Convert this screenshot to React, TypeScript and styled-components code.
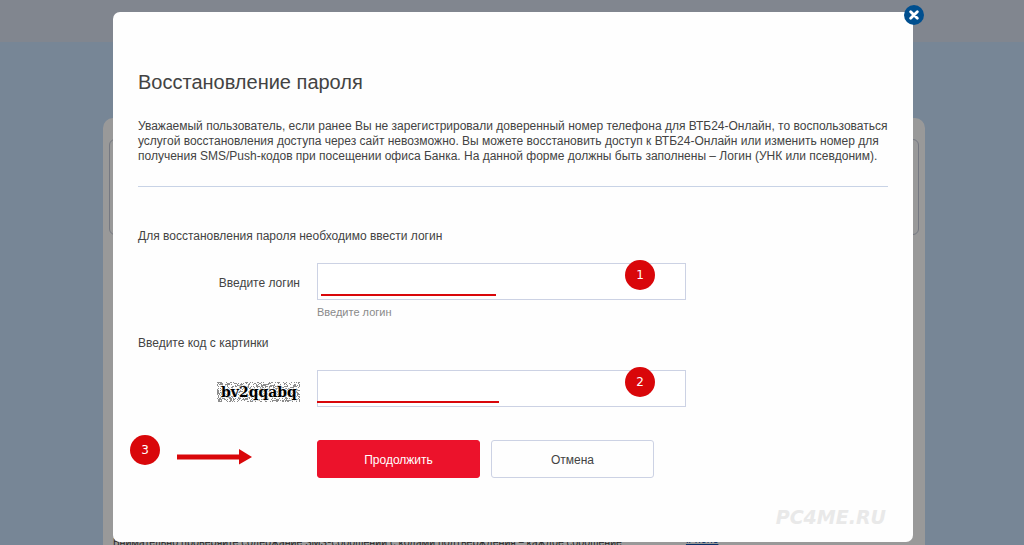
import React from "react";
import styled, { createGlobalStyle } from "styled-components";

const GlobalStyle = createGlobalStyle`
  * { box-sizing: border-box; }
  html, body, #root { height: 100%; margin: 0; }
  body {
    overflow: hidden;
    color: #434343;
    font-family: "Liberation Sans", Arial, sans-serif;
    font-size: 12px;
    line-height: 15px;
  }
  button, input { font: inherit; }
`;

const Page = styled.div`
  position: relative;
  min-height: 100vh;
  background: #c6dffa;
`;

const TopBar = styled.header`
  height: 42px;
  background: #d8dfee;
`;

const PageCard = styled.main`
  display: flex;
  flex-direction: column;
  gap: 297px;
  margin: 76px 99px 0 103px;
  padding: 21px 6px;
  border-radius: 10px;
  background: #ffffff;
`;

const OutlinePanel = styled.section`
  height: 96px;
  border: 1px solid #c3c9d8;
  border-radius: 6px;
`;

const PageNotes = styled.div`
  display: flex;
  padding-left: 4px;
  gap: 54px;
  font-family: Inter, sans-serif;
  font-size: 10px;
  white-space: nowrap;
`;

const NoteText = styled.p`
  margin: 0;
  padding-top: 3px;
`;

const StoreLink = styled.a`
  color: #0f4fa8;
  &::before {
    content: "»";
    display: inline-block;
    width: 10px;
    color: #e0703a;
  }
`;

const Overlay = styled.div`
  position: fixed;
  inset: 0;
  padding: 12px 111px 0 113px;
  background: rgba(0, 0, 0, 0.4);
`;

const Dialog = styled.section`
  position: relative;
  padding: 57px 25px 15px;
  border-radius: 7px;
  background: #fefefe;
`;

const CloseButton = styled.button`
  position: absolute;
  top: -7px;
  right: -11px;
  display: grid;
  width: 20px;
  height: 20px;
  padding: 0;
  place-items: center;
  border: 0;
  border-radius: 50%;
  background: #004f8f;
`;

const Title = styled.h1`
  margin: 0;
  font-size: 20px;
  line-height: 26px;
  font-weight: 400;
`;

const Intro = styled.p`
  margin: 24px -8px 0 0;
`;

const Divider = styled.hr`
  margin: 22px 0 0;
  border: 0;
  border-top: 1px solid #c8d3e6;
`;

const Prompt = styled.label<{ $space: number }>`
  display: block;
  margin: ${(p) => p.$space}px 0 0;
`;

const FormRow = styled.div<{ $space: number }>`
  display: grid;
  grid-template-columns: 162px 369px;
  column-gap: 17px;
  align-items: center;
  margin-top: ${(p) => p.$space}px;
`;

const Label = styled.label`
  justify-self: end;
  padding-top: 3px;
`;

const Field = styled.div`
  position: relative;
`;

const TextInput = styled.input`
  display: block;
  width: 100%;
  height: 37px;
  padding: 0 10px;
  border: 1px solid #ccd2e4;
  border-radius: 0;
  background: #ffffff;
`;

const Hint = styled.small`
  grid-column: 2;
  margin-top: 5px;
  color: #8a8a8a;
  font-size: 11px;
`;

const Marker = styled.span`
  display: grid;
  width: 30px;
  height: 30px;
  place-items: center;
  border-radius: 50%;
  background: #d9070a;
  color: #ffffff;
  font-family: "DejaVu Sans", sans-serif;
  font-size: 12px;
`;

const FieldMarker = styled(Marker)`
  position: absolute;
  top: -3px;
  right: 31px;
`;

const Underline = styled.span<{ $left: number; $width: number }>`
  position: absolute;
  bottom: 4px;
  left: ${(p) => p.$left}px;
  width: ${(p) => p.$width}px;
  height: 2px;
  background: #d9070a;
`;

const Captcha = styled.svg`
  display: block;
  justify-self: end;
  margin-top: 6px;
`;

const Actions = styled.div`
  display: flex;
  align-items: flex-start;
  margin: 28px 0 0 -8px;
`;

const Arrow = styled.svg`
  display: block;
  margin: 14px 65px 0 17px;
`;

const ActionButton = styled.button<{ $primary?: boolean }>`
  width: 163px;
  height: 38px;
  margin: 5px 11px 0 0;
  padding: 2px 0 0;
  border: 1px solid ${(p) => (p.$primary ? "#ec122b" : "#ccd2e4")};
  border-radius: 3px;
  background: ${(p) => (p.$primary ? "#ec122b" : "#fefefe")};
  color: ${(p) => (p.$primary ? "#ffffff" : "#434343")};
`;

const Watermark = styled.p`
  margin: 29px 2px 0 0;
  color: #e9e9e9;
  font-family: "DejaVu Sans", sans-serif;
  font-size: 19px;
  font-style: italic;
  font-weight: 700;
  line-height: 20px;
  text-align: right;
`;

// Speckle behind the captcha characters, from a fixed seed so that it is stable.
function speckle(width: number, height: number) {
  let seed = 24;
  let d = "";
  for (let y = 0; y < height; y += 1) {
    for (let x = 0; x < width; x += 1) {
      seed = (seed * 1103515245 + 12345) % 2147483648;
      if (seed / 2147483648 < 0.42) d += `M${x} ${y}h1v1h-1z`;
    }
  }
  return d;
}

const captchaNoise = speckle(83, 20);

export default function App() {
  return (
    <>
      <GlobalStyle />
      <Page>
        <TopBar />
        <PageCard>
          <OutlinePanel />
          <PageNotes>
            <NoteText>
              Внимательно проверяйте содержание SMS-сообщений с кодами подтверждения – каждое сообщение
            </NoteText>
            <StoreLink href="#iphone">iPhone</StoreLink>
          </PageNotes>
        </PageCard>
      </Page>
      <Overlay>
        <Dialog role="dialog" aria-labelledby="dialog-title">
          <CloseButton type="button" aria-label="Закрыть">
            <svg width="10" height="10" viewBox="0 0 10 10" aria-hidden="true">
              <path d="M1.7 1.7 8.3 8.3M8.3 1.7 1.7 8.3" stroke="#fff" strokeWidth="2.8" strokeLinecap="round" />
            </svg>
          </CloseButton>
          <Title id="dialog-title">Восстановление пароля</Title>
          <Intro>
            Уважаемый пользователь, если ранее Вы не зарегистрировали доверенный номер телефона для ВТБ24-Онлайн, то
            воспользоваться услугой восстановления доступа через сайт невозможно. Вы можете восстановить доступ к
            ВТБ24-Онлайн или изменить номер для получения SMS/Push-кодов при посещении офиса Банка. На данной форме
            должны быть заполнены – Логин (УНК или псевдоним).
          </Intro>
          <Divider />
          <form onSubmit={(e) => e.preventDefault()}>
            <Prompt as="p" $space={42}>
              Для восстановления пароля необходимо ввести логин
            </Prompt>
            <FormRow $space={19}>
              <Label htmlFor="login">Введите логин</Label>
              <Field>
                <TextInput id="login" name="login" />
                <Underline $left={4} $width={175} />
                <FieldMarker>1</FieldMarker>
              </Field>
              <Hint>Введите логин</Hint>
            </FormRow>
            <Prompt htmlFor="code" $space={16}>
              Введите код с картинки
            </Prompt>
            <FormRow $space={19}>
              <Captcha width="83" height="20" viewBox="0 0 83 20" role="img" aria-label="Код">
                <path d={captchaNoise} fill="#8c8c8c" shapeRendering="crispEdges" />
                <text
                  x="4"
                  y="15"
                  fontFamily="DejaVu Serif, serif"
                  fontSize="14"
                  fontWeight="700"
                  fill="#000"
                  stroke="#fff"
                  strokeOpacity="0.7"
                  strokeWidth="2"
                  paintOrder="stroke"
                >
                  bv2qqabq
                </text>
              </Captcha>
              <Field>
                <TextInput id="code" name="code" />
                <Underline $left={0} $width={182} />
                <FieldMarker>2</FieldMarker>
              </Field>
            </FormRow>
            <Actions>
              <Marker>3</Marker>
              <Arrow width="75" height="16" viewBox="0 0 75 16" aria-hidden="true">
                <path d="M0 5.500h62V0l13 8-13 7.500V10.500H0z" fill="#d9070a" />
              </Arrow>
              <ActionButton type="submit" $primary>
                Продолжить
              </ActionButton>
              <ActionButton type="button">Отмена</ActionButton>
            </Actions>
          </form>
          <Watermark>PC4ME.RU</Watermark>
        </Dialog>
      </Overlay>
    </>
  );
}
